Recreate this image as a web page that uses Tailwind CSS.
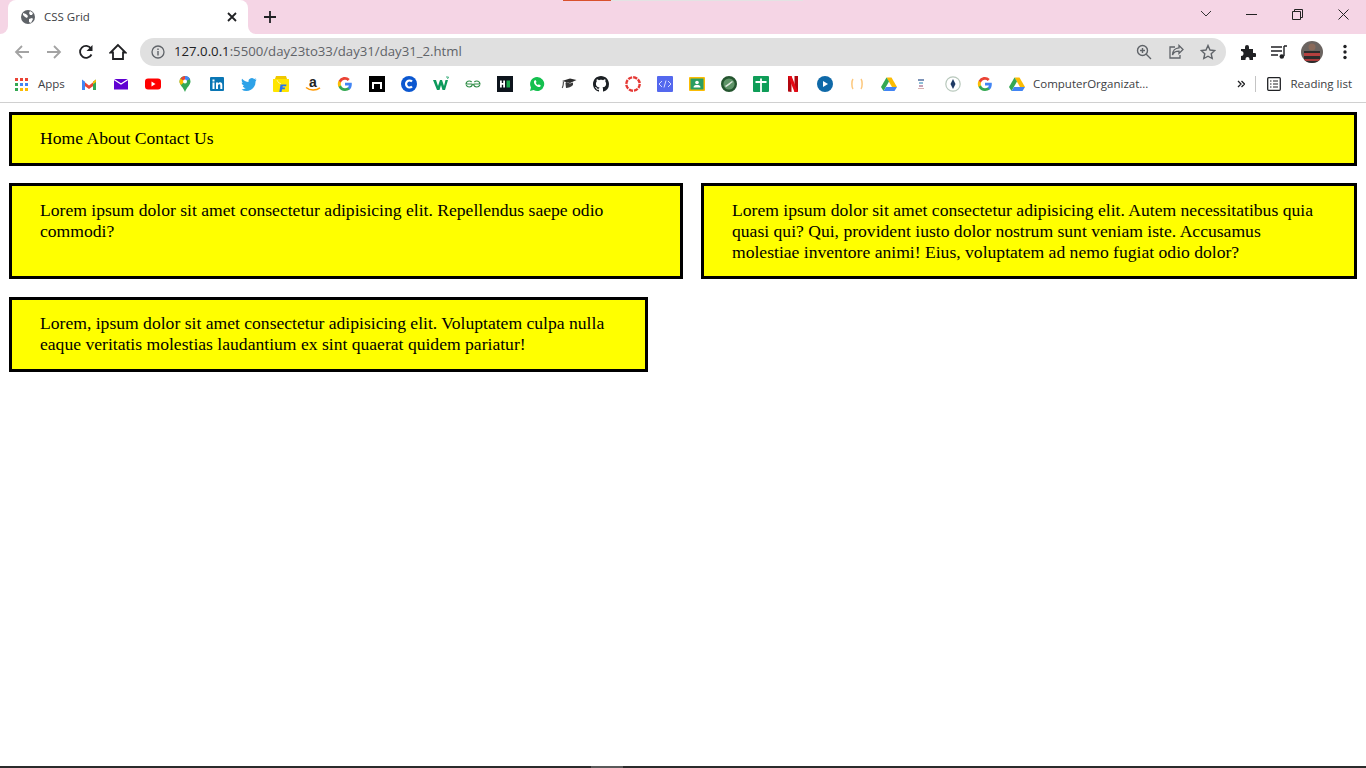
<!DOCTYPE html>
<html lang="en">
<head>
  <meta charset="UTF-8" />
  <title>CSS Grid</title>
  <script src="https://cdn.jsdelivr.net/npm/@tailwindcss/browser@4"></script>
</head>
<body class="bg-white h-[768px] overflow-hidden flex flex-col font-['Open_Sans',sans-serif]">
  <!-- Tab strip -->
  <div class="relative h-[34px] bg-[#f5d5e5] flex items-end shrink-0">
    <div class="absolute top-0 left-[563px] h-px w-[48px] bg-[#d9512c]"></div>
    <div class="absolute top-0 left-[611px] h-px w-[192px] bg-[#e3e3e3]"></div>
    <div class="absolute left-0 bottom-0 w-2 h-2 bg-white"><div class="w-2 h-2 bg-[#f5d5e5] rounded-br-[8px]"></div></div>
    <div class="absolute left-[248px] bottom-0 w-2 h-2 bg-white"><div class="w-2 h-2 bg-[#f5d5e5] rounded-bl-[8px]"></div></div>
    <div class="ml-2 w-[240px] h-[34px] bg-white rounded-t-[8px] flex items-center">
      <svg class="ml-3 w-4 h-4" viewBox="0 0 16 16"><circle cx="8" cy="8" r="7" fill="#5f6368"/><path d="M3 4l3 1 2 2-1 2-2-1-2-2zM10 2l3 2-1 2-2 0-1-2zM9 10l3-1 1 1-2 4-2-1z" fill="#fff"/></svg>
      <span class="ml-[8px] text-[11.5px] text-[#3c4043]">CSS Grid</span>
      <svg class="ml-auto mr-[11px] w-[10px] h-[10px]" viewBox="0 0 10 10"><path d="M1 1l8 8M9 1l-8 8" stroke="#202124" stroke-width="1.800"/></svg>
    </div>
    <svg class="ml-[16px] mb-[11px] w-3 h-3" viewBox="0 0 12 12"><path d="M6 0v12M0 6h12" stroke="#202124" stroke-width="1.800"/></svg>
    <div class="ml-auto flex items-center self-start h-[28px]">
      <svg class="w-[12px] h-[8px]" viewBox="0 0 12 8"><path d="M1 1l5 5 5-5" fill="none" stroke="#333" stroke-width="1"/></svg>
      <svg class="ml-[34px] w-[11px] h-[11px]" viewBox="0 0 11 11"><path d="M0 5.500h11" stroke="#222" stroke-width="1"/></svg>
      <svg class="ml-[35px] w-[11px] h-[11px]" viewBox="0 0 11 11"><path d="M.5 2.500h8v8h-8zM2.500 2.500v-2h8v8h-2" fill="none" stroke="#222" stroke-width="1"/></svg>
      <svg class="ml-[35px] mr-[17px] w-[11px] h-[11px]" viewBox="0 0 11 11"><path d="M.5.5l10 10M10.500.5l-10 10" stroke="#222" stroke-width="1"/></svg>
    </div>
  </div>

  <!-- Toolbar -->
  <div class="h-[38px] pb-[2px] bg-white flex items-center shrink-0">
    <svg class="ml-[14px] w-4 h-4" viewBox="0 0 16 16"><path d="M15 8H2M8 2L2 8l6 6" fill="none" stroke="#a3a3a3" stroke-width="1.800"/></svg>
    <svg class="ml-[16px] w-4 h-4" viewBox="0 0 16 16"><path d="M1 8h13M8 2l6 6-6 6" fill="none" stroke="#a3a3a3" stroke-width="1.800"/></svg>
    <svg class="ml-[16px] w-4 h-4" viewBox="0 0 16 16"><path d="M13.500 10.500A6 6 0 1 1 13 4.500" fill="none" stroke="#202124" stroke-width="1.800"/><path d="M14.500 1v6h-6z" fill="#202124"/></svg>
    <svg class="ml-[15px] w-[18px] h-[18px]" viewBox="0 0 18 18"><path d="M9 2L1.500 9.500H4V16h10V9.500h2.500z" fill="none" stroke="#202124" stroke-width="1.800"/></svg>
    <div class="ml-[13px] w-[1086px] h-7 rounded-full bg-[#e0e0e0] flex items-center">
      <svg class="ml-[11px] w-[14px] h-[14px]" viewBox="0 0 14 14"><circle cx="7" cy="7" r="6" fill="none" stroke="#5f6368" stroke-width="1.300"/><path d="M7 6v4.500M7 3.500v1.500" stroke="#5f6368" stroke-width="1.400"/></svg>
      <span class="ml-[9px] text-[13.2px] leading-none text-[#5f6368]"><span class="text-[#202124]">127.0.0.1</span>:5500/day23to33/day31/day31_2.html</span>
      <svg class="ml-auto w-4 h-4" viewBox="0 0 16 16"><circle cx="6.500" cy="6.500" r="5" fill="none" stroke="#5f6368" stroke-width="1.400"/><path d="M10 10l5 5M6.500 4v5M4 6.500h5" stroke="#5f6368" stroke-width="1.400"/></svg>
      <svg class="ml-[16px] w-4 h-4" viewBox="0 0 16 16"><path d="M11 1.500l4 4-4 4V7.200C7 7.200 5.500 8.500 4.500 11 4.500 7 7 4 11 3.800zM7 3H2v11h10v-3" fill="none" stroke="#5f6368" stroke-width="1.300"/></svg>
      <svg class="ml-[16px] mr-[10px] w-4 h-4" viewBox="0 0 16 16"><path d="M8 1.500l2 4.500 4.800.5-3.600 3.200 1 4.800L8 12.200l-4.200 2.300 1-4.800L1.200 6.500 6 6z" fill="none" stroke="#5f6368" stroke-width="1.400"/></svg>
    </div>
    <svg class="ml-[14px] w-4 h-4" viewBox="0 0 16 16"><path d="M1 5h4V3a2 2 0 0 1 4 0v2h4v4h1.500a2 2 0 0 1 0 4H13v3H9.500v-1a2 2 0 0 0-4 0v1H1v-4a2 2 0 0 0 0-5z" fill="#202124"/></svg>
    <svg class="ml-[15px] w-4 h-4" viewBox="0 0 16 16"><path d="M0 3h11M0 7h11M0 11h7" stroke="#202124" stroke-width="1.400"/><path d="M13 2v10M13 2h3" stroke="#202124" stroke-width="1.400"/><circle cx="10.800" cy="12.500" r="2.300" fill="#202124"/></svg>
    <svg class="ml-[14px] w-[22px] h-[22px]" viewBox="0 0 22 22"><clipPath id="avatar"><circle cx="11" cy="11" r="11"/></clipPath><g clip-path="url(#avatar)"><rect width="22" height="22" fill="#6b6460"/><circle cx="11" cy="6" r="3.500" fill="#8a6a5a"/><rect x="3" y="10" width="16" height="12" fill="#2c2c2c"/><rect x="3" y="12" width="16" height="3" fill="#b5403f"/><rect x="3" y="18" width="16" height="2" fill="#a83a3a"/></g></svg>
    <svg class="ml-[20px] w-[4px] h-[16px]" viewBox="0 0 4 16"><circle cx="2" cy="2.500" r="1.700" fill="#202124"/><circle cx="2" cy="8" r="1.700" fill="#202124"/><circle cx="2" cy="13.500" r="1.700" fill="#202124"/></svg>
  </div>

  <!-- Bookmarks -->
  <div class="h-[31px] pb-[6px] border-b border-[#d0d0d0] flex items-center shrink-0 text-[11.5px] text-[#3c4043]">
    <svg class="ml-[15px] w-[13px] h-[13px]" viewBox="0 0 13 13">
      <rect width="3" height="3" fill="#ea4335"/><rect x="5" width="3" height="3" fill="#ea4335"/><rect x="10" width="3" height="3" fill="#ea4335"/>
      <rect y="5" width="3" height="3" fill="#34a853"/><rect x="5" y="5" width="3" height="3" fill="#4285f4"/><rect x="10" y="5" width="3" height="3" fill="#4285f4"/>
      <rect y="10" width="3" height="3" fill="#34a853"/><rect x="5" y="10" width="3" height="3" fill="#fbbc05"/><rect x="10" y="10" width="3" height="3" fill="#fbbc05"/>
    </svg>
    <span class="ml-[10px] w-[43px]">Apps</span>
    <div class="flex items-center gap-4">
      <!-- gmail -->
      <svg class="w-4 h-4" viewBox="0 0 16 16"><path d="M1 4l7 5.500L15 4v4l-7 5-7-5z" fill="#ea4335"/><path d="M1 14V3.500l3 2.300V14z" fill="#4285f4"/><path d="M12 14V5.800l3-2.300V14z" fill="#34a853"/><path d="M12 5.800l3-2.300V6l-3 2.200z" fill="#fbbc05"/></svg>
      <!-- yahoo mail -->
      <svg class="w-4 h-4" viewBox="0 0 16 16"><rect x="1" y="3" width="14" height="10.500" fill="#6001d2"/><path d="M1 3.500l7 4.500 7-4.500" fill="none" stroke="#fff" stroke-width="1.200"/></svg>
      <!-- youtube -->
      <svg class="w-4 h-4" viewBox="0 0 16 16"><rect y="2.500" width="16" height="11" rx="3" fill="#f00"/><path d="M6.500 5.500l4 2.500-4 2.500z" fill="#fff"/></svg>
      <!-- maps -->
      <svg class="w-4 h-4" viewBox="0 0 16 16"><path d="M8 0a5.500 5.500 0 0 1 5.500 5.500c0 3.500-4 6-5.500 10.500C6.500 11.500 2.500 9 2.500 5.500A5.500 5.500 0 0 1 8 0z" fill="#34a853"/><path d="M3.500 2.500L8 5.500 4 9C3 7.800 2.500 6.800 2.500 5.500c0-1 .4-2.200 1-3z" fill="#fbbc05"/><path d="M3.500 2.500A5.500 5.500 0 0 1 8 0l1 2.500-1 3z" fill="#ea4335"/><path d="M8 0a5.500 5.500 0 0 1 5 3L8 5.500z" fill="#4285f4"/><circle cx="8" cy="5.500" r="2" fill="#fff"/></svg>
      <!-- linkedin -->
      <svg class="w-4 h-4" viewBox="0 0 16 16"><rect x="1" y="1" width="14" height="14" rx="1" fill="#0a76b4"/><path d="M3.500 6.500h2V13h-2zM3.500 3.500h2v2h-2zM7 6.500h2v1c.5-.8 1.300-1.200 2.100-1.200 1.500 0 2.200 1 2.200 2.700v4h-2V9.500c0-.8-.3-1.300-1-1.300S9 8.800 9 9.500V13H7z" fill="#fff"/></svg>
      <!-- twitter -->
      <svg class="w-4 h-4" viewBox="0 0 16 16"><path d="M15.500 3.500c-.6.300-1.200.4-1.800.5.700-.4 1.100-1 1.400-1.700-.6.400-1.300.6-2 .8A3.200 3.200 0 0 0 7.600 6C5 5.900 2.600 4.600 1.100 2.700c-.8 1.400-.4 3.300 1 4.300-.5 0-1-.2-1.400-.4 0 1.600 1.100 2.900 2.600 3.200-.5.100-1 .2-1.500.1.400 1.300 1.600 2.200 3 2.200A6.500 6.500 0 0 1 .5 13.500 9.100 9.100 0 0 0 14.500 5.400c.4-.5.700-1.200 1-1.900z" fill="#2ea2e8"/></svg>
      <!-- flipkart -->
      <svg class="w-4 h-4" viewBox="0 0 16 16"><path d="M0 3h16v12a1 1 0 0 1-1 1H1a1 1 0 0 1-1-1z" fill="#ffe500"/><path d="M2 3l1-3h10l1 3z" fill="#f0c800"/><path d="M4 4c1 3 3 3.500 4 3.500" fill="none" stroke="#fff3a0"/><path d="M7.500 8.500h6l-.4 1.700H9.800l-.3 1.300h2.600l-.4 1.700H9.100L8.500 16h-2.200z" fill="#2874f0"/></svg>
      <!-- amazon -->
      <svg class="w-4 h-4 overflow-visible" viewBox="0 0 16 16"><text x="8" y="10.500" text-anchor="middle" font-family="Liberation Sans, sans-serif" font-weight="700" font-size="14" fill="#222">a</text><path d="M1 11.500c4 3.300 10 3.300 14 .3" fill="none" stroke="#f90" stroke-width="1.500"/></svg>
      <!-- google -->
      <svg class="w-4 h-4" viewBox="0 0 16 16"><use href="#g-logo"/></svg>
      <!-- black box -->
      <svg class="w-4 h-4" viewBox="0 0 16 16"><rect width="16" height="16" fill="#000"/><path d="M3 13V6h10v7h-2V8H5v5z" fill="#fff"/></svg>
      <!-- blue C -->
      <svg class="w-4 h-4" viewBox="0 0 16 16"><circle cx="8" cy="8" r="8" fill="#0b57d0"/><path d="M11 5.500A3.500 3.500 0 1 0 11 10.500" fill="none" stroke="#fff" stroke-width="2.200"/></svg>
      <!-- w3 -->
      <svg class="w-4 h-4" viewBox="0 0 16 16"><path d="M0 4h3l2 6 2-6h2l2 6 1.500-6H15l-3 10H9.500L8 9l-1.500 5H4z" fill="#0d9a5c"/><path d="M13 1h2.500L14.500 3" fill="none" stroke="#0d9a5c" stroke-width=".8"/></svg>
      <!-- gfg -->
      <svg class="w-4 h-4" viewBox="0 0 16 16"><path d="M7.500 8H1c.3-2 2-3 3.200-3 1 0 1.900.4 2.400 1M8.500 8H15c-.3-2-2-3-3.200-3-1 0-1.900.4-2.400 1M7.500 8c-.3 2-1.800 3-3.300 3-1.300 0-2.500-.8-3-2M8.500 8c.3 2 1.800 3 3.300 3 1.300 0 2.500-.8 3-2" fill="none" stroke="#2f8d46" stroke-width="1.200"/></svg>
      <!-- hackerrank -->
      <svg class="w-4 h-4" viewBox="0 0 16 16"><rect width="16" height="16" fill="#0d141c"/><path d="M3 4.500h1.800v2.500h1.400V4.500H8v7H6.200V8.700H4.800v2.800H3z" fill="#fff"/><rect x="9.500" y="4.500" width="3.500" height="7" fill="#1ba94c"/></svg>
      <!-- whatsapp -->
      <svg class="w-4 h-4" viewBox="0 0 16 16"><path d="M8 1a7 7 0 0 0-6 10.500L1 15l3.600-1A7 7 0 1 0 8 1z" fill="#14c04f"/><path d="M5.500 4.500C4.500 5.500 4.800 7.500 6.500 9.300s3.800 2.300 4.900 1.200l.4-1-2-1.200-.8.800c-1-.4-1.800-1.300-2.200-2.300l.8-.8L6.500 4z" fill="#fff"/></svg>
      <!-- cap -->
      <svg class="w-4 h-4" viewBox="0 0 16 16"><path d="M1 5l8-2.500L15.500 4 9 7z" fill="#2c2c2c"/><path d="M4.500 7.500c0-1 .5-1.300 1-1.500L9 7.500l3-1v2.500c-1.500 2-5 2.800-7 3z" fill="#3a3a3a"/><path d="M2.500 5.500c0 2.500-.4 4.500-1.200 6.500" stroke="#555" stroke-width="1.200" fill="none"/></svg>
      <!-- github -->
      <svg class="w-4 h-4" viewBox="0 0 16 16"><path fill="#1b1f23" d="M8 0C3.580 0 0 3.580 0 8c0 3.540 2.290 6.530 5.470 7.590.4.070.55-.17.55-.38 0-.19-.01-.82-.01-1.490-2.010.37-2.530-.49-2.690-.94-.09-.23-.48-.94-.82-1.130-.28-.15-.68-.52-.01-.53.630-.01 1.080.58 1.230.82.720 1.210 1.870.87 2.330.66.070-.52.280-.87.510-1.070-1.780-.2-3.640-.89-3.640-3.950 0-.87.310-1.590.82-2.150-.08-.2-.36-1.020.08-2.120 0 0 .67-.21 2.200.82.640-.18 1.320-.27 2-.27s1.360.09 2 .27c1.530-1.040 2.200-.82 2.200-.82.440 1.100.16 1.920.08 2.120.51.560.82 1.270.82 2.150 0 3.070-1.870 3.750-3.650 3.950.29.250.54.730.54 1.480 0 1.070-.01 1.930-.01 2.200 0 .21.150.46.550.38A8.010 8.010 0 0 0 16 8c0-4.420-3.580-8-8-8z"/></svg>
      <!-- red dashed ring -->
      <svg class="w-4 h-4" viewBox="0 0 16 16"><circle cx="8" cy="8" r="6.700" fill="none" stroke="#e53935" stroke-width="2.400" stroke-dasharray="4.200 1.060"/></svg>
      <!-- code -->
      <svg class="w-4 h-4" viewBox="0 0 16 16"><rect width="16" height="16" rx="1" fill="#5468ee"/><path d="M5 5L2 8l3 3M11 5l3 3-3 3M9 4.500L7 11.500" fill="none" stroke="#d5dbff" stroke-width="1"/></svg>
      <!-- classroom -->
      <svg class="w-4 h-4" viewBox="0 0 16 16"><rect y="1" width="16" height="14" rx="1" fill="#fbbc04"/><rect x="1.500" y="2.500" width="13" height="11" fill="#2a9d62"/><circle cx="8" cy="6.500" r="1.800" fill="#fff"/><path d="M4.500 11.500c0-2 1.500-2.500 3.500-2.500s3.500.5 3.500 2.500z" fill="#fff"/></svg>
      <!-- green round -->
      <svg class="w-4 h-4" viewBox="0 0 16 16"><circle cx="8" cy="8" r="6.800" fill="#5f9468" stroke="#24552f" stroke-width="2.400"/><path d="M4.500 10.500c2-1 4-3 7-5" fill="none" stroke="#dfe9df" stroke-width="1.500"/></svg>
      <!-- green cross -->
      <svg class="w-4 h-4" viewBox="0 0 16 16"><rect width="16" height="16" rx="1" fill="#0f9d58"/><path d="M2.500 6h11M8 2.500V16" stroke="#fff" stroke-width="1.800"/></svg>
      <!-- netflix -->
      <svg class="w-4 h-4" viewBox="0 0 16 16"><path d="M3 0h3.500v16L3 15.500zM9.500 0H13v15.500L9.500 16z" fill="#b1060f"/><path d="M3 0h3.500L13 16H9.500z" fill="#e50914"/></svg>
      <!-- play -->
      <svg class="w-4 h-4" viewBox="0 0 16 16"><circle cx="8" cy="8" r="8" fill="#0f69a8"/><path d="M6 5l5 3-5 3z" fill="#fff"/></svg>
      <!-- brackets -->
      <svg class="w-4 h-4" viewBox="0 0 16 16"><path d="M4 3C2.500 5 2.500 11 4 13M12 3c1.500 2 1.500 8 0 10" fill="none" stroke="#fcc77c" stroke-width="1.500"/></svg>
      <!-- drive -->
      <svg class="w-4 h-4" viewBox="0 0 16 16"><use href="#drive-logo"/></svg>
      <!-- small thing -->
      <svg class="w-4 h-4" viewBox="0 0 16 16"><rect x="5" y="3" width="6" height="2" fill="#7d93b8"/><rect x="6" y="6" width="4" height="2" fill="#8fc0d8"/><rect x="6" y="9" width="4" height="2" fill="#c6a2b8"/><rect x="5" y="12" width="6" height="1" fill="#d9b0b0"/></svg>
      <!-- pen nib -->
      <svg class="w-4 h-4" viewBox="0 0 16 16"><circle cx="8" cy="8" r="7.200" fill="#fff" stroke="#b8c8bc" stroke-width="1.200"/><path d="M8 3l2.500 5L8 13 5.500 8z" fill="#1f3a64"/></svg>
      <!-- google -->
      <svg class="w-4 h-4" viewBox="0 0 16 16"><use href="#g-logo"/></svg>
      <!-- drive + label -->
      <div class="flex items-center">
        <svg class="w-4 h-4" viewBox="0 0 16 16"><use href="#drive-logo"/></svg>
        <span class="ml-2">ComputerOrganizat...</span>
      </div>
    </div>
    <svg class="ml-auto w-[8px] h-[8px]" viewBox="0 0 8 8"><path d="M1 1l3 3-3 3M4.500 1l3 3-3 3" fill="none" stroke="#202124" stroke-width="1.300"/></svg>
    <div class="ml-[10px] w-px h-4 bg-[#c4c4c4]"></div>
    <svg class="ml-[11px] w-[14px] h-[14px]" viewBox="0 0 14 14"><rect x=".7" y=".7" width="12.600" height="12.600" rx="1" fill="none" stroke="#202124" stroke-width="1.300"/><path d="M3 4h1.500M6 4h5M3 7h1.500M6 7h5M3 10h1.500M6 10h5" stroke="#202124" stroke-width="1.200"/></svg>
    <span class="ml-[9px] mr-[14px] text-[#3c4043]">Reading list</span>
  </div>

  <!-- Page content -->
  <main class="flex-1 px-[9px] pt-[9px] font-['Liberation_Serif',serif] text-[17.6px] leading-[21px] text-black">
    <div class="border-[3px] border-black bg-[#ffff00] pl-[28px] pr-[27px] pt-[13px] pb-[14px]">Home About Contact Us</div>
    <div class="grid grid-cols-[674px_656px] gap-[18px] mt-[17px]">
      <div class="border-[3px] border-black bg-[#ffff00] pl-[28px] pr-[27px] py-[13.5px]">Lorem ipsum dolor sit amet consectetur adipisicing elit. Repellendus saepe odio commodi?</div>
      <div class="border-[3px] border-black bg-[#ffff00] pl-[28px] pr-[27px] py-[13.5px]">Lorem ipsum dolor sit amet consectetur adipisicing elit. Autem necessitatibus quia quasi qui? Qui, provident iusto dolor nostrum sunt veniam iste. Accusamus molestiae inventore animi! Eius, voluptatem ad nemo fugiat odio dolor?</div>
    </div>
    <div class="w-[639px] mt-[18px] border-[3px] border-black bg-[#ffff00] pl-[28px] pr-[27px] pt-[13px] pb-[14px]">Lorem, ipsum dolor sit amet consectetur adipisicing elit. Voluptatem culpa nulla eaque veritatis molestias laudantium ex sint quaerat quidem pariatur!</div>
  </main>

  <!-- Sliver of the taskbar -->
  <div class="h-[2px] bg-[#2b2b2b] flex shrink-0">
    <div class="ml-[591px] w-[32px] bg-[#5a5a5a]"></div>
  </div>

  <svg class="hidden" viewBox="0 0 16 16">
    <defs>
      <g id="g-logo">
        <path d="M14.800 8.200c0-.5 0-1-.1-1.500H8v2.800h3.900c-.2.900-.7 1.700-1.400 2.200v1.800h2.300c1.300-1.200 2-3.100 2-5.300z" fill="#4285f4"/>
        <path d="M8 15c1.900 0 3.500-.6 4.800-1.700l-2.300-1.800c-.6.400-1.500.7-2.500.7-1.900 0-3.500-1.300-4-3H1.600v1.900A7 7 0 0 0 8 15z" fill="#34a853"/>
        <path d="M4 9.200a4.200 4.200 0 0 1 0-2.600V4.700H1.600a7 7 0 0 0 0 6.400z" fill="#fbbc05"/>
        <path d="M8 3.800c1 0 2 .4 2.700 1.100l2-2A7 7 0 0 0 1.600 4.700L4 6.600c.5-1.700 2.100-2.800 4-2.800z" fill="#ea4335"/>
      </g>
      <g id="drive-logo">
        <path d="M5.500 1.500h5L16 11h-5z" fill="#fbbc04"/>
        <path d="M5.500 1.500L0 11l2.500 4 5.500-9.500z" fill="#34a853"/>
        <path d="M5 11h11l-2.500 4h-11z" fill="#4285f4"/>
      </g>
    </defs>
  </svg>
</body>
</html>
